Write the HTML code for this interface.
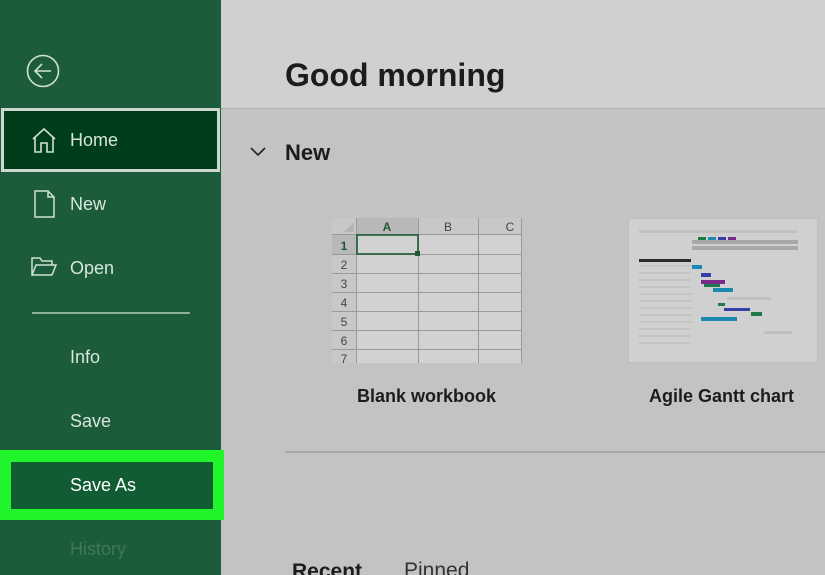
<!DOCTYPE html>
<html style="overflow:hidden"><head><style>
*{margin:0;padding:0;box-sizing:border-box}
html,body{width:825px;height:575px;overflow:hidden}
body{position:relative;font-family:"Liberation Sans",sans-serif;background:#c3c3c3}
.side{position:absolute;left:0;top:0;width:221px;height:575px;background:#1d5c3a}
.it{position:absolute;left:70px;font-size:18px;color:#d6e6da}
.ic{position:absolute}
.main{position:absolute;left:221px;top:0;right:0;bottom:0;overflow:hidden}
.hdr{position:absolute;left:0;top:0;right:0;height:109px;background:#d0d0d0;border-bottom:1px solid #b0b0b0}
.t{position:absolute;color:#1c1c1c;white-space:nowrap}
</style></head><body>
<div class="side">
<svg class="ic" style="left:26px;top:54px" width="34" height="34" viewBox="0 0 34 34"><circle cx="17" cy="17" r="15.5" fill="none" stroke="#cfe1d4" stroke-width="1.6"/><path d="M25 17H10M16 10l-7 7 7 7" fill="none" stroke="#cfe1d4" stroke-width="1.6"/></svg>
<div style="position:absolute;left:1px;top:108px;width:219px;height:64px;background:#003d1b;border:3px solid #cfd8d0"></div>
<svg class="ic" style="left:31px;top:127px" width="26" height="27" viewBox="0 0 26 27"><path d="M2 12L13 2l11 10M4 10v15h6v-9h6v9h6V10" fill="none" stroke="#cfe1d4" stroke-width="1.6"/></svg>
<div class="it" style="top:130px">Home</div>
<svg class="ic" style="left:34px;top:190px" width="22" height="28" viewBox="0 0 22 28"><path d="M1 1h13l6 6v20H1zM14 1v6h6" fill="none" stroke="#cfe1d4" stroke-width="1.5"/></svg>
<div class="it" style="top:194px">New</div>
<svg class="ic" style="left:31px;top:257px" width="26" height="20" viewBox="0 0 26 20"><path d="M1 18V1h8l2 3h10v4M1 18l4-10h20l-4 10z" fill="none" stroke="#cfe1d4" stroke-width="1.5"/></svg>
<div class="it" style="top:258px">Open</div>
<div style="position:absolute;left:32px;top:312px;width:158px;height:2px;background:#8fb09a"></div>
<div class="it" style="top:347px">Info</div>
<div class="it" style="top:411px">Save</div>
<div style="position:absolute;left:0;top:450px;width:224px;height:70px;background:#1ff52a"></div>
<div style="position:absolute;left:11px;top:462px;width:202px;height:47px;background:#115c33"></div>
<div class="it" style="top:475px;color:#fff">Save As</div>
<div class="it" style="top:539px;color:#3d7a55">History</div>
</div>
<div class="main">
<div class="hdr"></div>
<div class="t" style="left:64px;top:57px;font-size:32px;font-weight:bold">Good morning</div>
<svg style="position:absolute;left:29px;top:147px" width="16" height="10" viewBox="0 0 16 10"><path d="M1 1l7 7 7-7" fill="none" stroke="#222" stroke-width="1.6"/></svg>
<div class="t" style="left:64px;top:140px;font-size:22px;font-weight:bold">New</div>
<div style="position:absolute;left:111px;top:218px;width:190px;height:145px;background:#d2d2d2;overflow:hidden">
<svg width="190" height="145" viewBox="0 0 190 145">
<rect x="0" y="0" width="190" height="16" fill="#c8c8c8"/>
<rect x="0" y="0" width="24" height="145" fill="#c8c8c8"/>
<rect x="24" y="0" width="62" height="16" fill="#b8b8b8"/>
<rect x="0" y="17" width="24" height="19" fill="#b8b8b8"/>
<path d="M22 14V4L12 14z" fill="#b5b5b5"/>
<g stroke="#9a9a9a" stroke-width="1"><path d="M24.5 0V145M86.5 0V145M146.5 0V145M189.5 0V145"/><path d="M0 16.5H190M0 36.5H190M0 55.5H190M0 74.5H190M0 93.5H190M0 112.5H190M0 131.5H190"/></g>
<rect x="25" y="17" width="61" height="19" fill="none" stroke="#1f5a35" stroke-width="1.6"/>
<rect x="83" y="33" width="5" height="5" fill="#1f5a35"/>
<g font-family="Liberation Sans" font-size="12" fill="#444" text-anchor="middle"><text x="55" y="13" fill="#1f5a35" font-weight="bold">A</text><text x="116" y="13">B</text><text x="178" y="13">C</text>
<text x="12" y="32" fill="#1f5a35" font-weight="bold">1</text><text x="12" y="51">2</text><text x="12" y="70">3</text><text x="12" y="89">4</text><text x="12" y="108">5</text><text x="12" y="127">6</text><text x="12" y="145">7</text></g>
</svg></div>
<div class="t" style="left:136px;top:386px;font-size:18px;font-weight:bold">Blank workbook</div>
<div style="position:absolute;left:407px;top:218px;width:190px;height:145px;background:#d0d0d0;border:1px solid #bdbdbd">
<svg width="188" height="143" viewBox="0 0 188 143">
<rect x="10" y="11" width="158" height="3" fill="#c0c0c0"/>
<rect x="10" y="40" width="52" height="3" fill="#2a2a2a"/>
<rect x="63" y="21" width="106" height="4" fill="#a8a8a8"/><rect x="63" y="27" width="106" height="4" fill="#a8a8a8"/>
<rect x="69" y="18" width="8" height="3" fill="#1e7a4a"/><rect x="79" y="18" width="8" height="3" fill="#1a8ab0"/><rect x="89" y="18" width="8" height="3" fill="#3440a8"/><rect x="99" y="18" width="8" height="3" fill="#7a2a8a"/>
<g fill="#c4c4c4"><rect x="10" y="46" width="52" height="2"/><rect x="10" y="53" width="52" height="2"/><rect x="10" y="60" width="52" height="2"/><rect x="10" y="67" width="52" height="2"/><rect x="10" y="74" width="52" height="2"/><rect x="10" y="81" width="52" height="2"/><rect x="10" y="88" width="52" height="2"/><rect x="10" y="95" width="52" height="2"/><rect x="10" y="102" width="52" height="2"/><rect x="10" y="109" width="52" height="2"/><rect x="10" y="116" width="52" height="2"/><rect x="10" y="123" width="52" height="2"/></g>
<rect x="63" y="46" width="10" height="4" fill="#1a8ab0"/><rect x="72" y="54" width="10" height="4" fill="#3440a8"/>
<rect x="72" y="61" width="24" height="4" fill="#7a2a8a"/><rect x="75" y="65" width="16" height="3" fill="#1e7a4a"/><rect x="84" y="69" width="20" height="4" fill="#1a8ab0"/>
<rect x="98" y="78" width="44" height="3" fill="#c0c0c0"/><rect x="89" y="84" width="7" height="3" fill="#1e7a4a"/><rect x="95" y="89" width="26" height="3" fill="#3440a8"/><rect x="122" y="93" width="11" height="4" fill="#1e7a4a"/><rect x="72" y="98" width="36" height="4" fill="#1a8ab0"/>
<rect x="135" y="112" width="28" height="3" fill="#c0c0c0"/>
</svg></div>
<div class="t" style="left:428px;top:386px;font-size:18px;font-weight:bold">Agile Gantt chart</div>
<div style="position:absolute;left:64px;top:451px;right:0;height:2px;background:#a8a8a8"></div>
<div class="t" style="left:71px;top:560px;font-size:21px;font-weight:bold">Recent</div>
<div class="t" style="left:183px;top:559px;font-size:21px;color:#333">Pinned</div>
</div>
</body></html>
